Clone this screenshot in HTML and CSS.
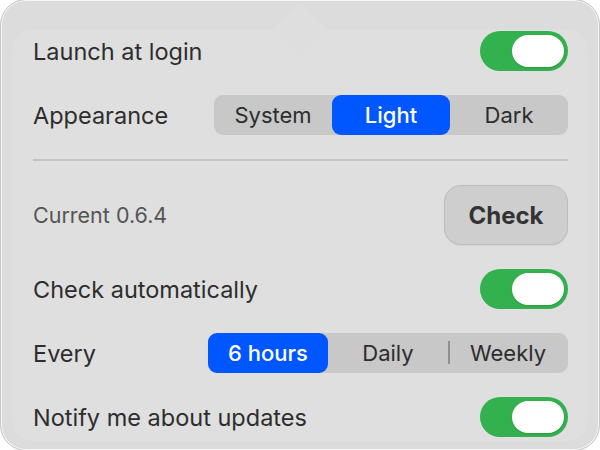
FILE: index.html
```html
<!DOCTYPE html>
<html lang="en">
<head>
  <meta charset="UTF-8">
  <meta name="viewport" content="width=device-width, initial-scale=1">
  <title>Settings</title>
  <link rel="stylesheet" href="styles.css">
</head>
<body>
  <div class="popover">
    <div class="sheet">
      <div class="row">
        <span class="label">Launch at login</span>
        <div class="toggle on" role="switch" aria-checked="true"><span class="knob"></span></div>
      </div>

      <div class="row">
        <span class="label">Appearance</span>
        <div class="segmented appearance">
          <span class="seg">System</span>
          <span class="seg selected">Light</span>
          <span class="seg">Dark</span>
        </div>
      </div>

      <hr class="divider">

      <div class="row row-tall">
        <span class="label muted">Current 0.6.4</span>
        <button type="button" class="check-btn">Check</button>
      </div>

      <div class="row">
        <span class="label">Check automatically</span>
        <div class="toggle on" role="switch" aria-checked="true"><span class="knob"></span></div>
      </div>

      <div class="row">
        <span class="label">Every</span>
        <div class="segmented interval">
          <span class="seg selected">6 hours</span>
          <span class="seg">Daily</span>
          <span class="seg sep">Weekly</span>
        </div>
      </div>

      <div class="row">
        <span class="label">Notify me about updates</span>
        <div class="toggle on" role="switch" aria-checked="true"><span class="knob"></span></div>
      </div>
    </div>
  </div>
</body>
</html>
```

FILE: styles.css
```css
/* Reset and base */
* {
  box-sizing: border-box;
}
body {
  margin: 0;
  background: #fff;
  font-family: 'Inter', 'Noto Sans', sans-serif;
  color: #2d2d2d;
  user-select: none;
}

/* Popover frame */
.popover {
  width: 600px;
  height: 452px;
  margin-top: -1px;
  background: #dcdcdc;
  border: 1px solid #c6c6c6;
  border-radius: 26px;
  box-shadow: inset 0 0 0 1px rgba(255,255,255,0.75);
  padding: 29px 11px 0;
}
.sheet {
  position: relative;
  background: #dfdfdf;
  border-radius: 20px;
  height: 412px;
  padding: 2px 20px 0 21px;
  display: flex;
  flex-direction: column;
  gap: 24px;
}
/* little arrow pointing up at the menu bar item */
.sheet::before {
  content: "";
  position: absolute;
  top: -20px;
  left: calc(50% - 20px);
  width: 40px;
  height: 40px;
  background: #dedede;
  border-radius: 6px 0 0 0;
  transform: rotate(45deg);
}

.row {
  position: relative;
  display: flex;
  align-items: center;
  justify-content: space-between;
  height: 40px;
}
.row-tall {
  height: 60px;
}
.label {
  font-size: 23.5px;
}
.label.muted {
  font-size: 21.5px;
  color: #555;
}

.divider {
  margin: 0;
  border: none;
  height: 2px;
  background: #c3c3c3;
}

/* Switch */
.toggle {
  width: 88px;
  height: 40px;
  border-radius: 20px;
  background: #34b14f;
  padding: 4px;
  display: flex;
  justify-content: flex-end;
}
.knob {
  width: 52px;
  height: 32px;
  border-radius: 16px;
  background: #fff;
  box-shadow: 0 1px 2px rgba(0,0,0,0.15);
}

/* Segmented control */
.segmented {
  display: flex;
  height: 40px;
  background: #c8c8c8;
  border-radius: 9px;
}
.seg {
  display: flex;
  align-items: center;
  justify-content: center;
  font-size: 22px;
  color: #2d2d2d;
  border-radius: 9px;
  position: relative;
}
.appearance .seg {
  width: 118px;
}
.interval .seg {
  width: 120px;
}
.seg.selected {
  background: #0057ff;
  color: #fff;
  font-weight: 500;
}
.seg.sep::before {
  content: "";
  position: absolute;
  left: 0;
  top: 8px;
  bottom: 9px;
  width: 2px;
  background: #8e8e8e;
}

/* Button */
.check-btn {
  width: 124px;
  height: 60px;
  border-radius: 17px;
  border: 1px solid #bcbcbc;
  background: #cecece;
  font-family: inherit;
  font-size: 24px;
  font-weight: 700;
  color: #333;
  box-shadow: 0 1px 1px rgba(0,0,0,0.06);
  cursor: pointer;
}
```
